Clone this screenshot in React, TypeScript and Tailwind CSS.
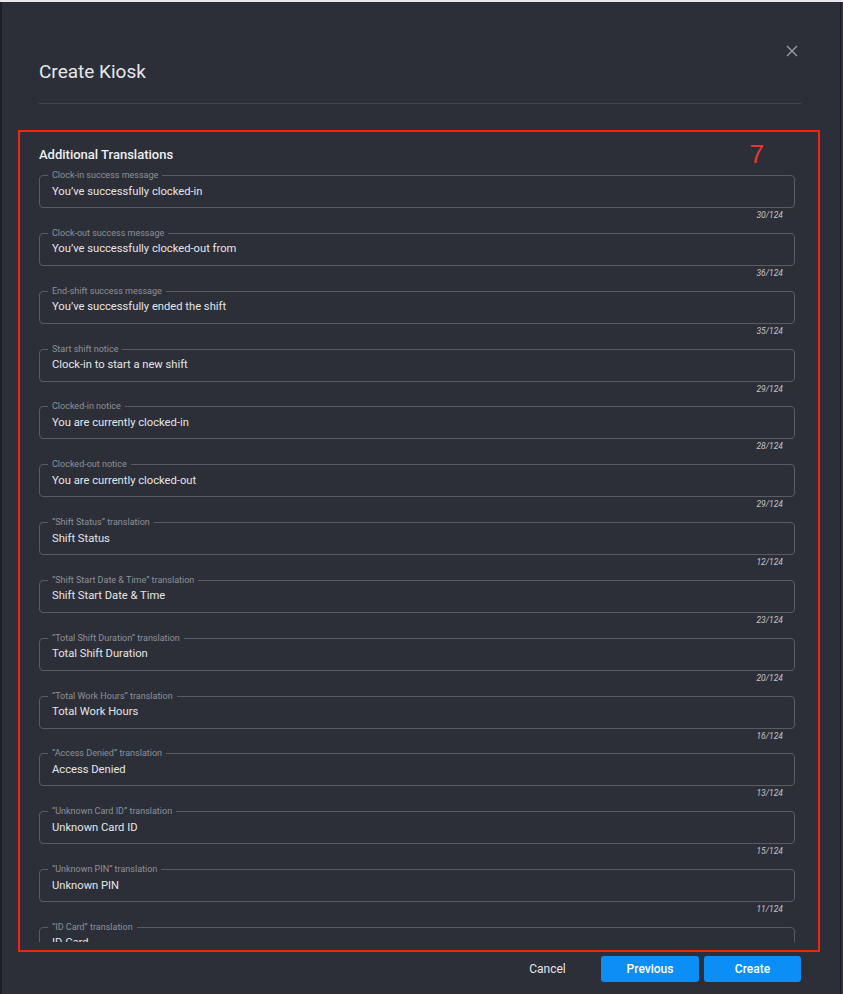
import React from "react";

const fields: { label: string; value: string; count: string }[] = [
  { label: "Clock-in success message", value: "You’ve successfully clocked-in", count: "30/124" },
  { label: "Clock-out success message", value: "You’ve successfully clocked-out from", count: "36/124" },
  { label: "End-shift success message", value: "You’ve successfully ended the shift", count: "35/124" },
  { label: "Start shift notice", value: "Clock-in to start a new shift", count: "29/124" },
  { label: "Clocked-in notice", value: "You are currently clocked-in", count: "28/124" },
  { label: "Clocked-out notice", value: "You are currently clocked-out", count: "29/124" },
  { label: "“Shift Status” translation", value: "Shift Status", count: "12/124" },
  { label: "“Shift Start Date & Time” translation", value: "Shift Start Date & Time", count: "23/124" },
  { label: "“Total Shift Duration” translation", value: "Total Shift Duration", count: "20/124" },
  { label: "“Total Work Hours” translation", value: "Total Work Hours", count: "16/124" },
  { label: "“Access Denied” translation", value: "Access Denied", count: "13/124" },
  { label: "“Unknown Card ID” translation", value: "Unknown Card ID", count: "15/124" },
  { label: "“Unknown PIN” translation", value: "Unknown PIN", count: "11/124" },
  { label: "“ID Card” translation", value: "ID Card", count: "7/124" },
];

function Field({ label, value, count }: { label: string; value: string; count: string }) {
  return (
    <div className="mb-[10.85px]">
      <div className="relative h-[33px] rounded-[4px] border border-[#585c64] flex items-center pl-[12px]">
        <span className="absolute left-[8px] top-[-7px] px-[4px] bg-[#2c2f38] text-[9px] leading-[12px] text-[#8d9199]">
          {label}
        </span>
        <span className="text-[11.2px] leading-[14px] text-[#e4e5e7]">{value}</span>
      </div>
      <div className="h-[14px] flex items-center justify-end pr-[12px]">
        <span className="text-[8.5px] italic text-[#c2c4c8] leading-[10px]">{count}</span>
      </div>
    </div>
  );
}

export default function App() {
  return (
    <div
      className="w-[843px] h-[994px] bg-[#2c2f38] overflow-hidden flex flex-col"
      style={{ fontFamily: "Roboto, 'Liberation Sans', sans-serif" }}
    >
      <div className="h-[2px] w-full bg-[#eee6ef]" />
      <div className="flex flex-1 min-h-0">
        <div className="w-[2px] bg-[#1b1e23]" />
        <div className="relative flex-1 flex flex-col">
          <button className="absolute right-[42px] top-[43px] w-[12px] h-[12px]">
            <svg viewBox="0 0 12 12" width="12" height="12">
              <path d="M1 1 L11 11 M11 1 L1 11" stroke="#9a9ea5" strokeWidth="1.4" fill="none" />
            </svg>
          </button>
          <div className="pl-[37px] pr-[39px] pt-[58px]">
            <h1 className="text-[19px] leading-[24px] text-[#e6e7e9]">Create Kiosk</h1>
            <div className="mt-[19px] h-px bg-[#41454d]" />
          </div>
          <div className="relative ml-[16px] mr-[20px] mt-[26px] h-[822px] border-2 border-[#f0260f] pt-[15px] pb-[8px] pl-[19px] pr-[23px] flex flex-col">
            <span
              className="absolute right-[54px] top-[8px] text-[26px] leading-[28px] text-[#e8362c]"
              style={{ fontFamily: "'Liberation Sans', sans-serif" }}
            >
              7
            </span>
            <div className="flex-1 min-h-0 overflow-hidden">
              <h2 className="text-[13px] leading-[16px] font-medium text-[#eef0f2] mb-[12px]">
                Additional Translations
              </h2>
              {fields.map((f) => (
                <Field key={f.label} {...f} />
              ))}
            </div>
          </div>
          <div className="mt-[4px] pr-[39px] flex justify-end gap-[5px]">
            <button className="w-[97px] h-[26px] text-[12px] leading-[14px] text-[#e4e5e7]">Cancel</button>
            <button className="w-[98px] h-[26px] rounded-[3px] bg-[#0b8ff7] text-[12px] leading-[14px] font-medium text-white">
              Previous
            </button>
            <button className="w-[97px] h-[26px] rounded-[3px] bg-[#0b8ff7] text-[12px] leading-[14px] font-medium text-white">
              Create
            </button>
          </div>
        </div>
        <div className="w-px bg-[#1b1e23]" />
        <div className="w-[2px] bg-[#2e3139]" />
      </div>
    </div>
  );
}
